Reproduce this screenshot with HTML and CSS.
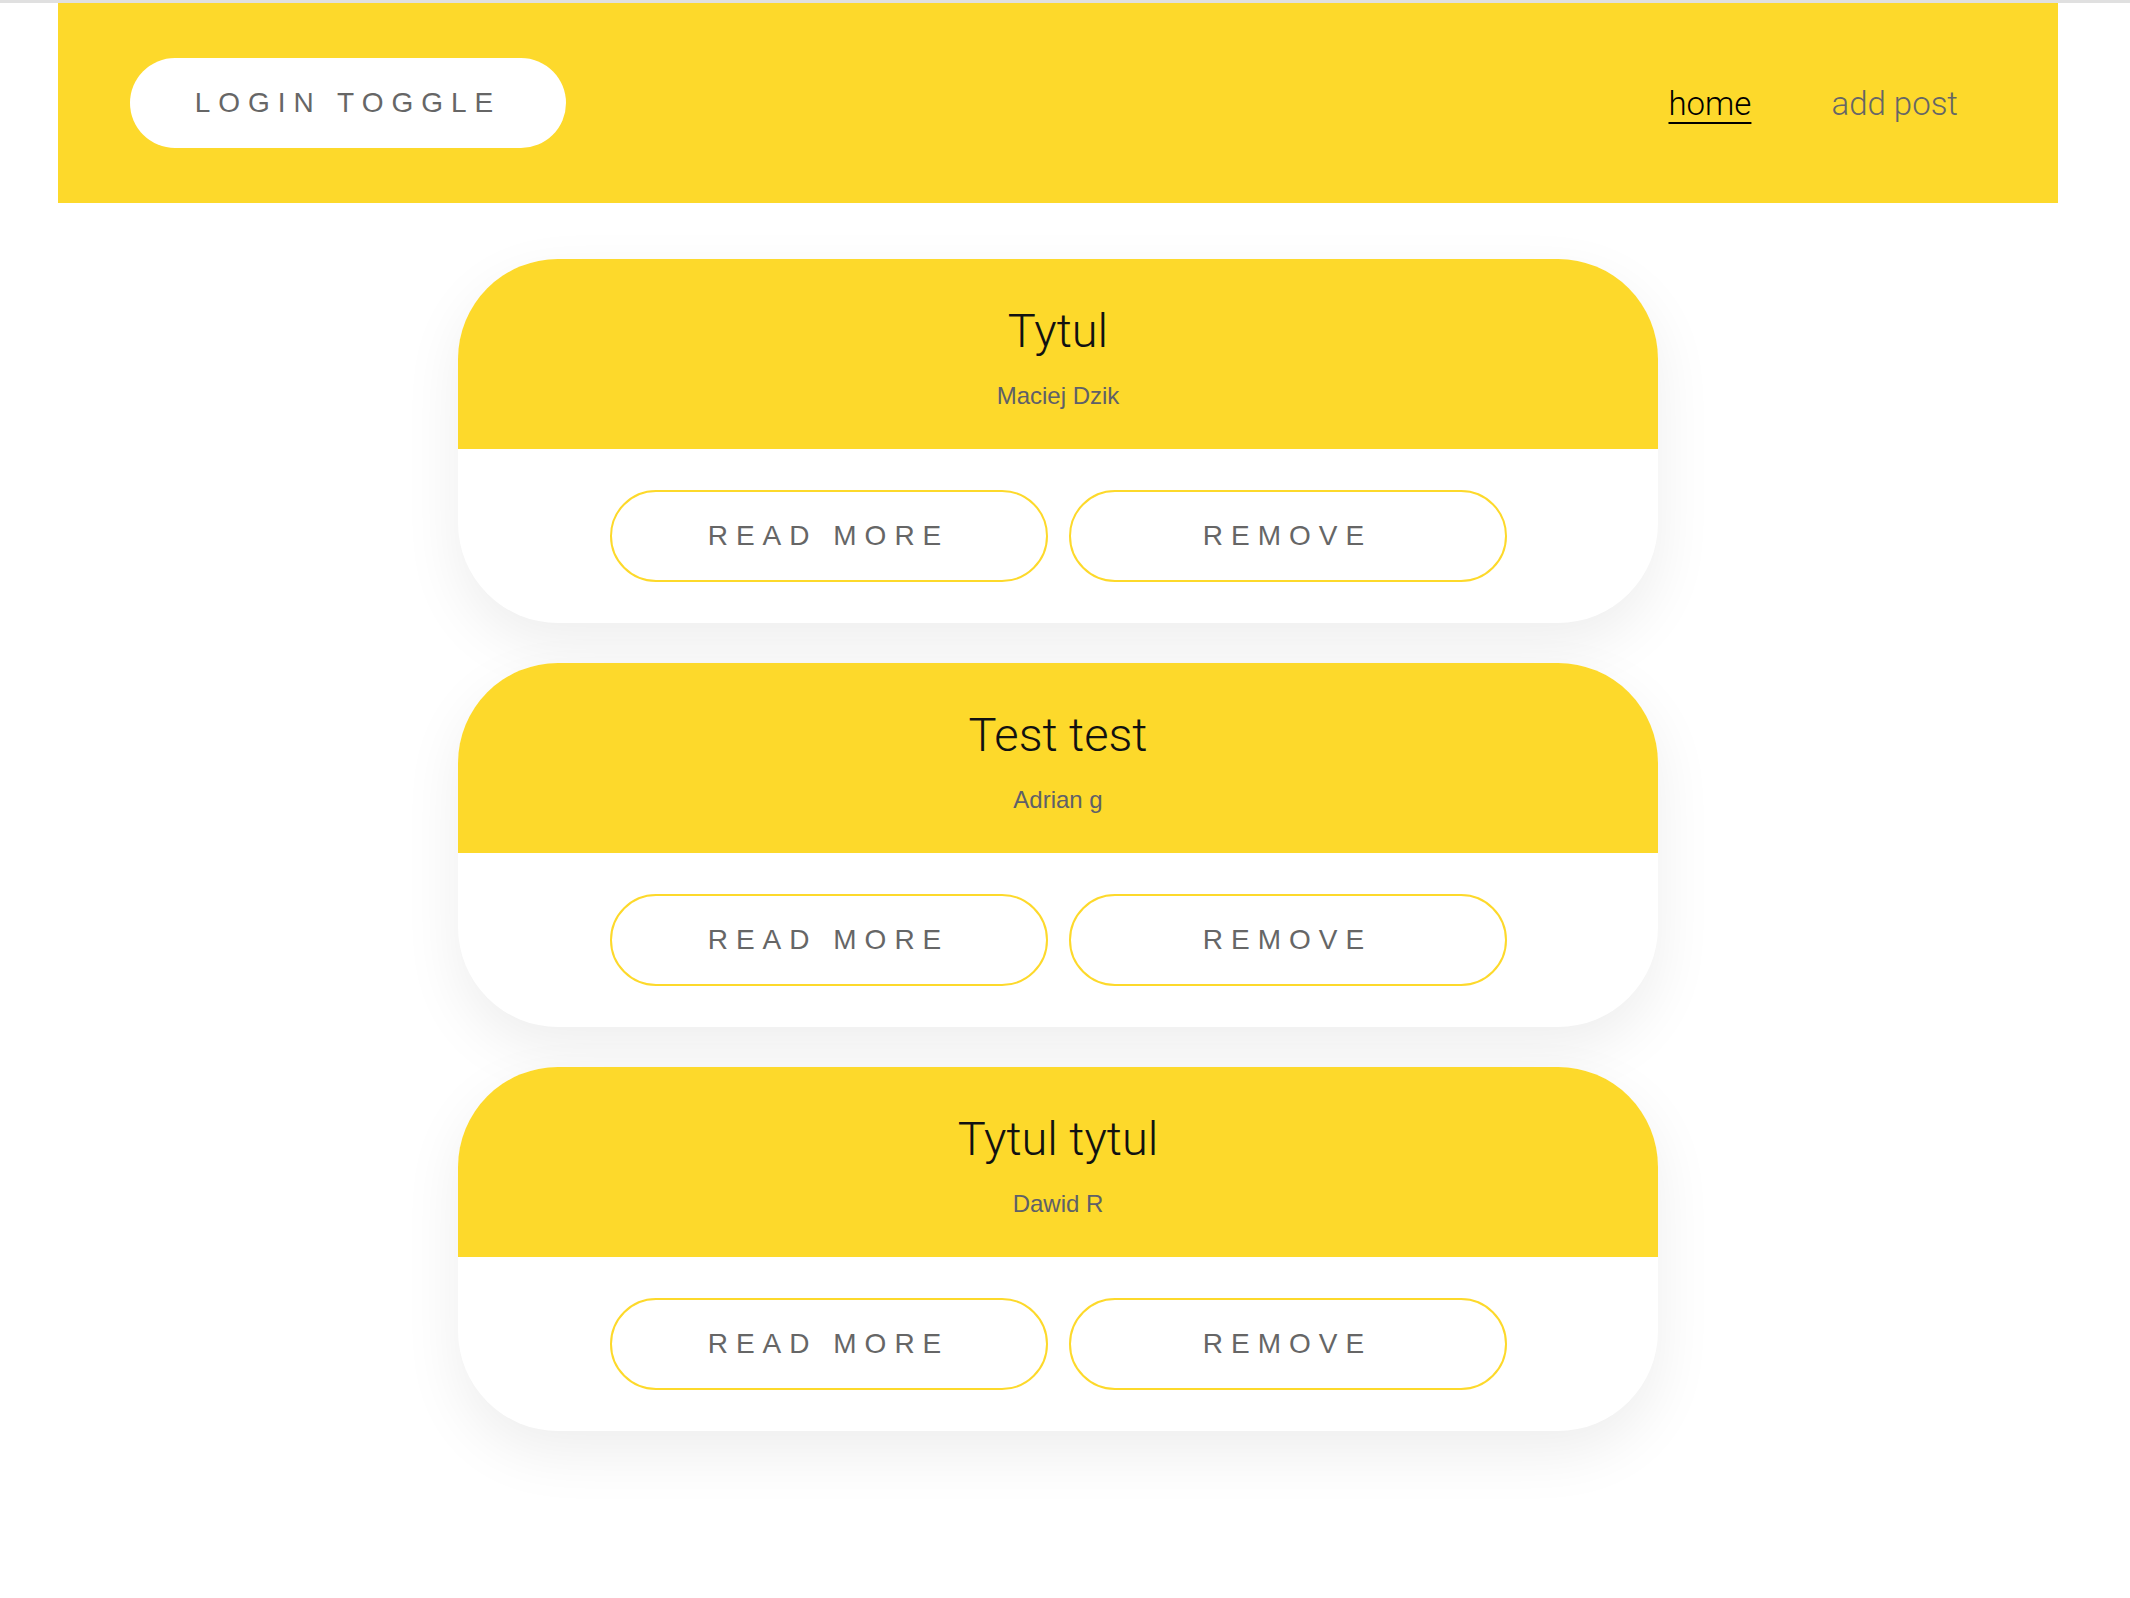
FILE: index.html
```html
<!DOCTYPE html>
<html lang="pl">
<head>
<meta charset="utf-8">
<title>Posts</title>
<link rel="stylesheet" href="styles.css">
</head>
<body>
<div class="page">
  <header class="topbar">
    <button class="login-btn">LOGIN TOGGLE</button>
    <nav class="nav">
      <a class="nav-link active" href="#">home</a>
      <a class="nav-link" href="#">add post</a>
    </nav>
  </header>

  <main class="posts">
    <article class="card">
      <div class="card-head">
        <h2 class="card-title">Tytul</h2>
        <p class="card-author">Maciej Dzik</p>
      </div>
      <div class="card-actions">
        <button class="outline-btn">READ MORE</button>
        <button class="outline-btn">REMOVE</button>
      </div>
    </article>

    <article class="card">
      <div class="card-head">
        <h2 class="card-title">Test test</h2>
        <p class="card-author">Adrian g</p>
      </div>
      <div class="card-actions">
        <button class="outline-btn">READ MORE</button>
        <button class="outline-btn">REMOVE</button>
      </div>
    </article>

    <article class="card">
      <div class="card-head">
        <h2 class="card-title">Tytul tytul</h2>
        <p class="card-author">Dawid R</p>
      </div>
      <div class="card-actions">
        <button class="outline-btn">READ MORE</button>
        <button class="outline-btn">REMOVE</button>
      </div>
    </article>
  </main>
</div>
</body>
</html>
```

FILE: styles.css
```css
* { box-sizing: border-box; }

html, body {
  margin: 0;
  padding: 0;
  background: #ffffff;
}

body {
  border-top: 3px solid #e0e0e0;
  font-family: "Liberation Sans", Arial, sans-serif;
  min-height: 1598px;
}

.page {
  width: 2000px;
  margin-left: 58px;
}

.topbar {
  height: 200px;
  background: #fdd92b;
  display: flex;
  align-items: center;
  justify-content: space-between;
  padding: 0 100px 0 72px;
}

.login-btn {
  width: 436px;
  height: 90px;
  border: none;
  border-radius: 45px;
  background: #ffffff;
  color: #666666;
  font-family: "Liberation Sans", Arial, sans-serif;
  font-size: 28px;
  letter-spacing: 8px;
  cursor: pointer;
}

.nav {
  display: flex;
  align-items: center;
  gap: 80px;
}

.nav-link {
  font-family: Roboto, "Liberation Sans", sans-serif;
  font-weight: 300;
  font-size: 33px;
  color: #666666;
  text-decoration: none;
}

.nav-link.active {
  color: #000000;
  text-decoration: underline;
  text-decoration-thickness: 2px;
  text-underline-offset: 7px;
}

.posts {
  display: flex;
  flex-direction: column;
  align-items: center;
  gap: 40px;
  padding-top: 56px;
}

.card {
  width: 1200px;
  border-radius: 100px;
  overflow: hidden;
  background: #ffffff;
  box-shadow: 0 22px 60px rgba(0, 0, 0, 0.07);
}

.card-head {
  height: 190px;
  background: #fdd92b;
  display: flex;
  flex-direction: column;
  align-items: center;
  padding-top: 44px;
}

.card-title {
  margin: 0;
  font-family: Roboto, "Liberation Sans", sans-serif;
  font-weight: 300;
  font-size: 47px;
  line-height: 56px;
  color: #111111;
}

.card-author {
  margin: 23px 0 0;
  font-size: 24px;
  line-height: 28px;
  color: #5f6068;
}

.card-actions {
  display: flex;
  justify-content: center;
  gap: 21px;
  padding: 41px 0 41px;
}

.outline-btn {
  width: 438px;
  height: 92px;
  border: 2px solid #fdd92b;
  border-radius: 46px;
  background: #ffffff;
  color: #666666;
  font-family: "Liberation Sans", Arial, sans-serif;
  font-size: 28px;
  letter-spacing: 8px;
  cursor: pointer;
}
```
